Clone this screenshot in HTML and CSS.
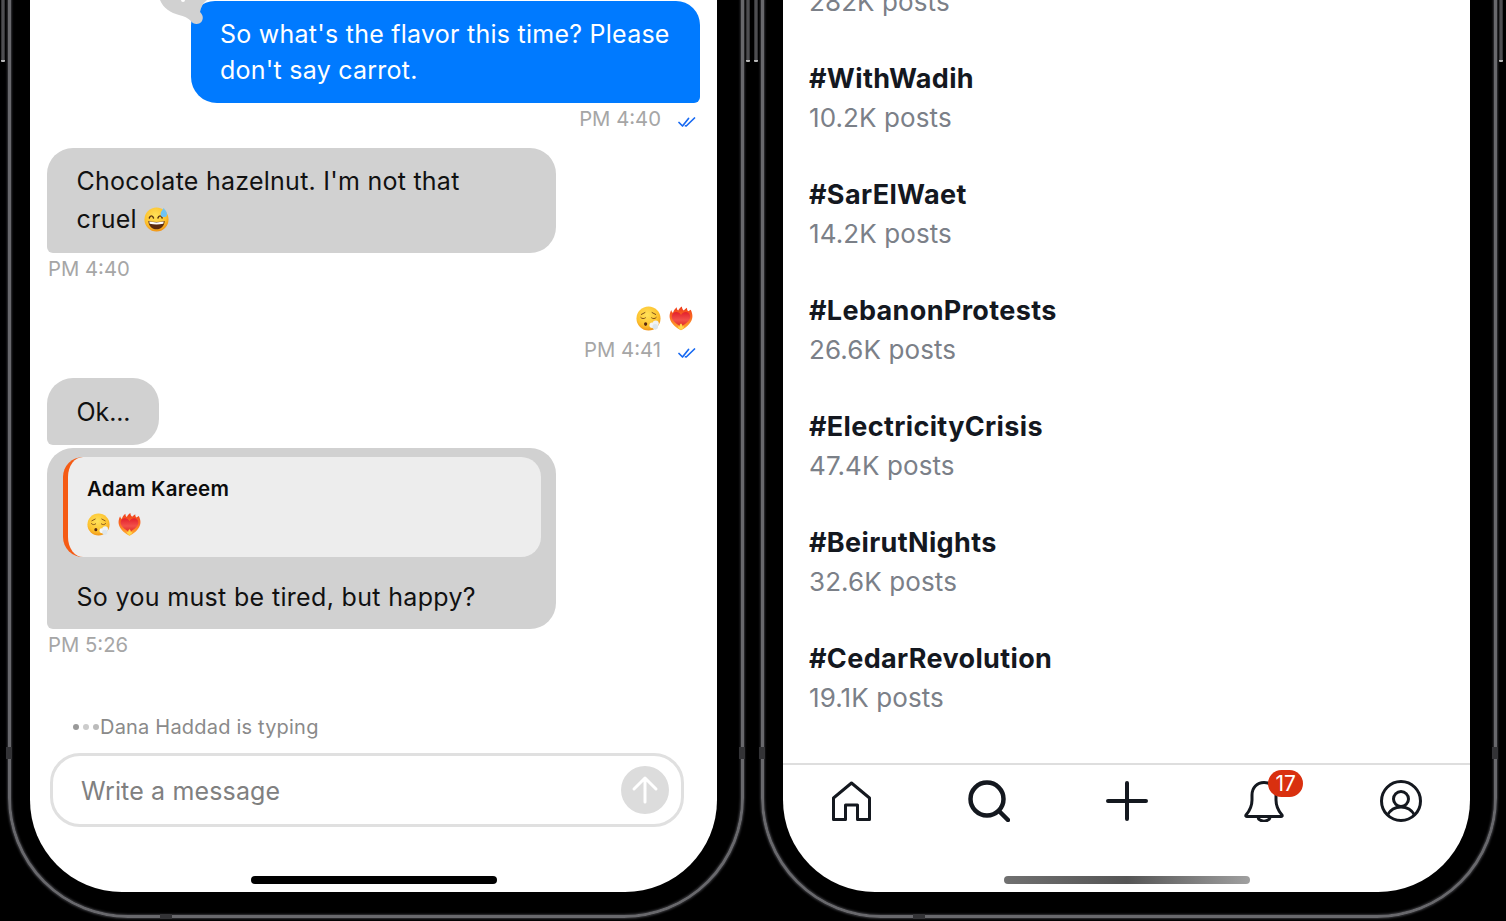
FILE: index.html
```html
<!DOCTYPE html>
<html lang="en">
<head>
    <meta charset="UTF-8">
    <meta name="viewport" content="width=device-width, initial-scale=1.0">
    <title>Chat and trending</title>
    <link rel="stylesheet" href="styles.css">
</head>
<body>
    <svg class="defs" width="0" height="0">
        <defs>
            <radialGradient id="face" cx="45%" cy="35%" r="70%">
                <stop offset="0" stop-color="#ffe25a"/>
                <stop offset="0.65" stop-color="#fdc22e"/>
                <stop offset="1" stop-color="#ee8a12"/>
            </radialGradient>
            <linearGradient id="fire" x1="0" y1="0" x2="0" y2="1">
                <stop offset="0" stop-color="#ee3a1c"/>
                <stop offset="0.45" stop-color="#fb6a22"/>
                <stop offset="1" stop-color="#ffb02e"/>
            </linearGradient>
            <linearGradient id="heart" x1="0" y1="0" x2="0" y2="1">
                <stop offset="0" stop-color="#e3202c"/>
                <stop offset="0.55" stop-color="#f2504a"/>
                <stop offset="1" stop-color="#dd2a24"/>
            </linearGradient>
            <symbol id="emoji-sweat" viewBox="0 0 26 26">
                <circle cx="13" cy="13" r="12.5" fill="url(#face)"/>
                <path d="M5.5 11.5c.8-3 3.600-3 4.400 0M14.500 11.500c.8-3 3.600-3 4.400 0" fill="none" stroke="#5a3310" stroke-width="1.500" stroke-linecap="round"/>
                <path d="M4.500 14.500c5.200 1.400 11.800 1.400 17 0-.3 5.200-3.800 8.700-8.500 8.700s-8.200-3.500-8.500-8.700z" fill="#5a2a10"/>
                <path d="M5.500 15.200c4.800 1.100 10.200 1.100 15 0l-.4 2.300c-4.500 1-9.700 1-14.200 0z" fill="#fff"/>
                <path d="M20.500 1c1.700 2.400 3.400 4.200 3.400 6.200a3.300 3.300 0 0 1-6.600 0c0-2 1.600-3.800 3.200-6.200z" fill="#6fc3f2"/>
            </symbol>
            <symbol id="emoji-exhale" viewBox="0 0 26 26">
                <circle cx="13" cy="13" r="12.500" fill="url(#face)"/>
                <path d="M5.500 8.800l3.800-2M20.500 8.800l-3.800-2M5 12c1.300 1.500 3.300 1.500 4.800.3M16.200 12.300c1.500 1.200 3.500 1.200 4.800-.3" fill="none" stroke="#7a4a18" stroke-width="1" stroke-linecap="round"/>
                <ellipse cx="10" cy="18.800" rx="1.700" ry="1.900" fill="#5a2a10"/>
                <circle cx="16.800" cy="20" r="2.800" fill="#f6f6f4"/>
                <circle cx="20.500" cy="18.300" r="3.200" fill="#eef2f5"/>
                <circle cx="20" cy="21.700" r="2.900" fill="#dde6ec"/>
            </symbol>
            <symbol id="emoji-heart" viewBox="0 0 26 26">
                <path d="M13 25.800C9 24 2 19 .8 12.500.3 9.500 1 6.500 2.400 3.800 2.800 5.400 3.400 6.400 4.300 6.800 5 4.300 6.400 2.400 8.400 .8 8.300 2.500 8.900 3.800 10 4.400 10.900 2.600 12.200 1 14 0 14 1.900 14.800 3.400 16 4.200 17 3.100 18 2.200 19.500 1.400 19.400 3.100 20 4.600 21 5.200 21.800 4.500 22.500 3.900 23.500 3.400 25 6.200 25.800 9.500 25.200 12.500 24 19 17 24 13 25.800Z" fill="url(#fire)"/>
                <path d="M13 21.800C7 18 3 15 3 10.800 3 8 5.300 6 7.800 6 10 6 12 7.200 13 9.300 14 7.200 16 6 18.200 6 20.700 6 23 8 23 10.800 23 15 19 18 13 21.800Z" fill="url(#heart)"/>
                <path d="M13 25.300C11.300 24.300 9.800 22.800 9.600 21 10.400 21.700 11 21.900 11.500 21.800 11.400 20.400 11.900 19.300 13 18.500 14.100 19.300 14.600 20.400 14.500 21.800 15 21.900 15.600 21.700 16.400 21 16.200 22.800 14.700 24.300 13 25.300Z" fill="#ffd84d"/>
            </symbol>
            <symbol id="check-double" viewBox="0 0 18 12">
                <path d="M1 6.500l3.500 3.500 6-7.500M7.500 9.800l.7.200 8.300-8" fill="none" stroke="#1769f2" stroke-width="1.700" stroke-linecap="round" stroke-linejoin="round"/>
            </symbol>
        </defs>
    </svg>

    <main class="stage">
        <section class="phone">
            <span class="side-btn side-btn-left"></span>
            <span class="side-btn side-btn-right"></span>
            <span class="band band-left"></span>
            <span class="band band-right"></span>
            <span class="band-bottom"></span>
            <div class="screen chat">
                <div class="bubble-wrap">
                    <svg class="reaction-blob" width="48" height="28" viewBox="0 0 48 28">
                        <path d="M0 0C3 8 11 13 19 15 24 16 28 18 31 21 33 25 40 25 42 21 44 17 42 14 40 12 41 7 43 3 47 0Z" fill="#d1d1d1"/>
                        <circle cx="23" cy="0" r="2" fill="#fff"/>
                    </svg>
                    <div class="bubble bubble-out">So what's the flavor this time? Please don't say carrot.</div>
                </div>
                <div class="meta meta-out">
                    <span class="time">PM 4:40</span>
                    <svg class="check"><use href="#check-double"/></svg>
                </div>

                <div class="bubble bubble-in bubble-tall">Chocolate hazelnut. I'm not that cruel <svg class="emoji emoji-inline"><use href="#emoji-sweat"/></svg></div>
                <div class="meta meta-in"><span class="time">PM 4:40</span></div>

                <div class="emoji-row">
                    <svg class="emoji"><use href="#emoji-exhale"/></svg>
                    <svg class="emoji emoji-heart"><use href="#emoji-heart"/></svg>
                </div>
                <div class="meta meta-out meta-tight">
                    <span class="time">PM 4:41</span>
                    <svg class="check"><use href="#check-double"/></svg>
                </div>

                <div class="bubble bubble-in bubble-short">Ok...</div>
                <div class="bubble bubble-in bubble-reply">
                    <div class="quote">
                        <div class="quote-name">Adam Kareem</div>
                        <div class="quote-emoji">
                            <svg class="emoji-small"><use href="#emoji-exhale"/></svg>
                            <svg class="emoji-small"><use href="#emoji-heart"/></svg>
                        </div>
                    </div>
                    <div class="reply-text">So you must be tired, but happy?</div>
                </div>
                <div class="meta meta-in"><span class="time">PM 5:26</span></div>

                <div class="typing">
                    <span class="dots"><i class="dot dot-1"></i><i class="dot dot-2"></i><i class="dot dot-3"></i></span>
                    <span>Dana Haddad is typing</span>
                </div>
                <div class="composer">
                    <span class="placeholder">Write a message</span>
                    <span class="send">
                        <svg width="48" height="48" viewBox="0 0 48 48">
                            <path d="M24 36V12M13 23L24 12L35 23" fill="none" stroke="#fff" stroke-width="3" stroke-linecap="round" stroke-linejoin="round"/>
                        </svg>
                    </span>
                </div>
                <div class="home-bar"></div>
            </div>
        </section>

        <section class="phone">
            <span class="side-btn side-btn-left"></span>
            <span class="side-btn side-btn-right"></span>
            <span class="band band-left"></span>
            <span class="band band-right"></span>
            <span class="band-bottom"></span>
            <div class="screen trends">
                <ul class="trend-list">
                    <li class="trend"><div class="trend-count">282K posts</div></li>
                    <li class="trend"><div class="trend-name">#WithWadih</div><div class="trend-count">10.2K posts</div></li>
                    <li class="trend"><div class="trend-name">#SarElWaet</div><div class="trend-count">14.2K posts</div></li>
                    <li class="trend"><div class="trend-name">#LebanonProtests</div><div class="trend-count">26.6K posts</div></li>
                    <li class="trend"><div class="trend-name">#ElectricityCrisis</div><div class="trend-count">47.4K posts</div></li>
                    <li class="trend"><div class="trend-name">#BeirutNights</div><div class="trend-count">32.6K posts</div></li>
                    <li class="trend"><div class="trend-name">#CedarRevolution</div><div class="trend-count">19.1K posts</div></li>
                </ul>
                <nav class="tabbar">
                    <svg class="tab-icon" viewBox="0 0 42 42">
                        <path d="M2.500 39.500V18L20.500 3L38.500 18V39.500H26.500V25H14.500V39.500Z" fill="none" stroke="#14181f" stroke-width="3" stroke-linejoin="round"/>
                    </svg>
                    <svg class="tab-icon" viewBox="0 0 42 42">
                        <circle cx="19" cy="19" r="16.500" fill="none" stroke="#14181f" stroke-width="4.500"/>
                        <path d="M31 31L40 40" fill="none" stroke="#14181f" stroke-width="4.500" stroke-linecap="round"/>
                    </svg>
                    <svg class="tab-icon" viewBox="0 0 42 42">
                        <path d="M21 3V39M2 21H40" fill="none" stroke="#14181f" stroke-width="4" stroke-linecap="round"/>
                    </svg>
                    <div class="tab-bell">
                        <svg class="tab-icon" viewBox="0 0 42 42">
                            <path d="M3 35C6.500 31 9 27 9 20V15C9 7.500 14 2.500 21 2.500S33 7.500 33 15V20C33 27 35.500 31 39 35C39.500 36 39 36.500 38 36.500H4C3 36.500 2.500 36 3 35Z" fill="none" stroke="#14181f" stroke-width="3" stroke-linejoin="round"/>
                            <path d="M15 37C15.500 42.500 26.500 42.500 27 37" fill="none" stroke="#14181f" stroke-width="3"/>
                        </svg>
                        <span class="badge">17</span>
                    </div>
                    <svg class="tab-icon" viewBox="0 0 42 42">
                        <circle cx="21" cy="21" r="19.500" fill="none" stroke="#14181f" stroke-width="3"/>
                        <circle cx="21" cy="19" r="7.500" fill="none" stroke="#14181f" stroke-width="3"/>
                        <path d="M7.500 35C10.500 29.500 15.500 27 21 27S31.500 29.500 34.500 35" fill="none" stroke="#14181f" stroke-width="3"/>
                    </svg>
                </nav>
                <div class="home-bar home-bar-fade"></div>
            </div>
        </section>
    </main>
</body>
</html>
```

FILE: styles.css
```css
* {
    box-sizing: border-box;
}
body {
    margin: 0;
    height: 921px;
    overflow: hidden;
    background-color: #000;
    font-family: 'Inter', 'Liberation Sans', sans-serif;
}
.defs {
    position: absolute;
}
.stage {
    display: flex;
    gap: 66px;
    padding-left: 30px;
}

/* phone body */
.phone {
    position: relative;
    width: 687px;
    height: 892px;
}
.phone::before {
    content: "";
    position: absolute;
    left: -22px;
    right: -27px;
    top: -200px;
    bottom: -26px;
    border: 3px solid #68686c;
    border-radius: 120px;
    box-shadow: 0 0 2px 1px #333337, inset 0 0 2px 1px #333337;
}
.side-btn {
    position: absolute;
    top: 0;
    width: 4px;
    height: 62px;
    background: linear-gradient(90deg, #2a2a2c, #5a5a5e, #2a2a2c);
    border-bottom: 2px solid #b8b8b8;
    border-radius: 0 0 1px 1px;
}
.side-btn-left {
    left: -29px;
}
.side-btn-right {
    right: -33px;
}
.band {
    position: absolute;
    top: 747px;
    width: 6px;
    height: 12px;
    background-color: #333336;
}
.band-left {
    left: -24px;
}
.band-right {
    right: -28px;
}
.band-bottom {
    position: absolute;
    left: 130px;
    bottom: -27px;
    width: 12px;
    height: 5px;
    background-color: #333336;
}
.screen {
    position: relative;
    height: 100%;
    overflow: hidden;
    display: flex;
    flex-direction: column;
    justify-content: flex-end;
    background-color: white;
    border-radius: 0 0 92px 92px;
}

/* chat */
.chat {
    padding: 0 17px 8px;
}
.bubble-wrap {
    position: relative;
    align-self: flex-end;
}
.reaction-blob {
    position: absolute;
    left: -31px;
    top: -1px;
    z-index: 2;
}
.bubble {
    width: 509px;
    font-size: 25px;
    line-height: 36px;
    letter-spacing: 0.25px;
}
.bubble-out {
    padding: 15px 29px;
    color: white;
    background-color: #007aff;
    border-radius: 24px 24px 6px 26px;
}
.bubble-in {
    flex-shrink: 0;
    color: #111;
    background-color: #d1d1d1;
    border-radius: 26px 26px 26px 6px;
}
.bubble-tall {
    margin-top: 17px;
    padding: 13.5px 70px 15.5px 29.5px;
    line-height: 38px;
}
.bubble-short {
    width: 112px;
    margin-top: 16px;
    padding: 15.5px 0 15.5px 29.5px;
    letter-spacing: -0.1px;
}
.bubble-reply {
    margin-top: 3px;
    padding: 9px 15px 14px 16px;
}
.emoji-inline {
    vertical-align: -4px;
}
.emoji {
    width: 25px;
    height: 25px;
}
.emoji-heart {
    width: 24px;
}
.meta {
    display: flex;
    align-items: center;
    height: 24px;
    margin-top: 4px;
    font-size: 20.3px;
    color: #a6a6a6;
}
.time {
    margin-top: -2px;
}
.meta-in {
    margin-left: 1px;
}
.meta-out {
    justify-content: flex-end;
    margin-right: 4px;
    gap: 17px;
}
.meta-tight {
    margin-top: 7px;
}
.check {
    width: 18px;
    height: 12px;
    margin-top: 5px;
}
.emoji-row {
    display: flex;
    justify-content: flex-end;
    gap: 8px;
    height: 26px;
    margin: 24px 7px 0 0;
    padding-top: 1px;
}
.quote {
    height: 100px;
    padding: 18px 20px 0 19px;
    background-color: #ededed;
    border-left: 5px solid #f55b14;
    border-radius: 20px;
}
.quote-name {
    font-size: 20.5px;
    line-height: 28px;
    font-weight: 600;
    color: #0c0c0c;
}
.quote-emoji {
    display: flex;
    gap: 8px;
    margin-top: 10px;
}
.emoji-small {
    width: 23px;
    height: 23px;
}
.reply-text {
    margin: 22px 0 0 13.5px;
    letter-spacing: 0.33px;
}
.typing {
    display: flex;
    align-items: center;
    height: 26px;
    margin: 57px 0 0 26px;
    font-size: 20px;
    letter-spacing: 0.2px;
    color: #8a8a8a;
}
.dots {
    display: flex;
    gap: 4px;
    margin-right: 1px;
}
.dot {
    width: 6px;
    height: 6px;
    border-radius: 50%;
}
.dot-1 {
    background-color: #999;
}
.dot-2 {
    background-color: #ccc;
}
.dot-3 {
    background-color: #bbb;
}
.composer {
    display: flex;
    align-items: center;
    justify-content: space-between;
    height: 74px;
    margin: 13px 16px 0 3px;
    padding: 0 12px 0 28px;
    border: 3px solid #e0e0e0;
    border-radius: 30px;
}
.placeholder {
    padding-top: 2px;
    font-size: 25px;
    letter-spacing: 0.15px;
    color: #808080;
}
.send {
    display: flex;
    width: 48px;
    height: 48px;
    background-color: #dcdcdc;
    border-radius: 50%;
}
.home-bar {
    flex-shrink: 0;
    width: 246px;
    height: 8px;
    margin: 49px auto 0;
    background-color: #000;
    border-radius: 4px;
}
.home-bar-fade {
    margin-top: 0;
    margin-bottom: 8px;
    background: linear-gradient(90deg, #707070, #555 50%, #a0a0a0);
}

/* trends */
.trend-list {
    list-style: none;
    margin: 0;
    padding: 0 0 47px 26px;
}
.trend {
    margin-top: 41px;
}
.trend-name {
    font-size: 27px;
    line-height: 36px;
    font-weight: 700;
    letter-spacing: 0.35px;
    color: #14181f;
}
.trend-count {
    margin-top: 3px;
    font-size: 26px;
    line-height: 36px;
    letter-spacing: 0.1px;
    color: #7b8088;
}
.tabbar {
    display: flex;
    flex-shrink: 0;
    justify-content: space-between;
    height: 59px;
    margin-bottom: 54px;
    padding: 15px 48px 0;
    border-top: 2px solid #dedede;
}
.tab-icon {
    display: block;
    width: 42px;
    height: 42px;
}
.tab-bell {
    position: relative;
    height: 42px;
}
.badge {
    position: absolute;
    left: 25.5px;
    top: -10px;
    width: 35px;
    height: 27px;
    font-size: 21px;
    line-height: 27px;
    text-align: center;
    color: white;
    background-color: #d9300f;
    border-radius: 14px;
}
```
